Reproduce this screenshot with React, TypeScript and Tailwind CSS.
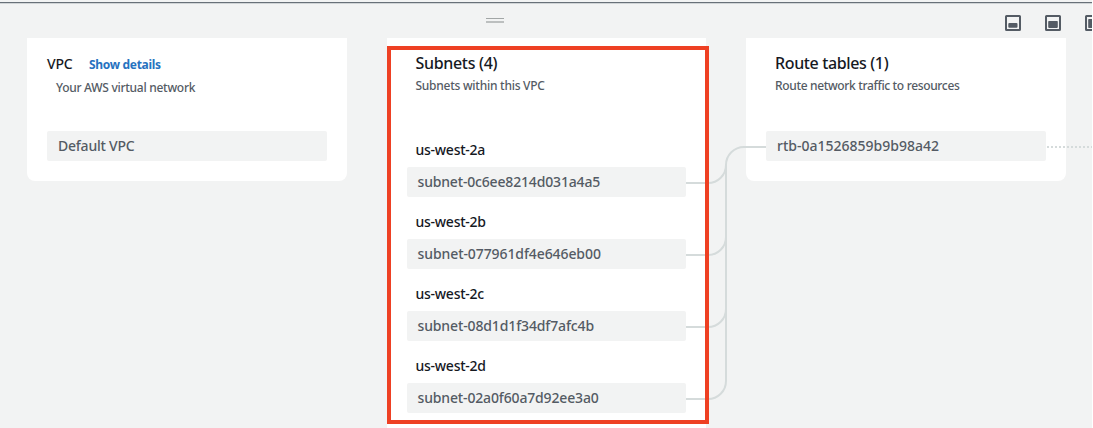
import React from "react";

const subnets = [
  { zone: "us-west-2a", id: "subnet-0c6ee8214d031a4a5", tracking: "tracking-[-0.17px]" },
  { zone: "us-west-2b", id: "subnet-077961df4e646eb00", tracking: "tracking-[-0.09px]" },
  { zone: "us-west-2c", id: "subnet-08d1d1f34df7afc4b", tracking: "tracking-[-0.13px]" },
  { zone: "us-west-2d", id: "subnet-02a0f60a7d92ee3a0", tracking: "tracking-[-0.15px]" },
];

function Resource({ label, tracking, inset = "pl-[11px]" }: { label: string; tracking: string; inset?: string }) {
  return (
    <div className={`flex h-[30px] w-full items-center rounded-[2px] bg-[#f2f3f3] pb-[2px] text-[14px] font-medium text-[#545b64] ${inset}`}>
      <span className={`whitespace-nowrap ${tracking}`}>{label}</span>
    </div>
  );
}

function PanelIcon({ variant }: { variant: "small" | "medium" | "full" }) {
  return (
    <svg className="size-4 shrink-0" viewBox="0 0 16 16" fill="none">
      <rect x="1" y="1" width="14" height="14" rx="0.5" stroke="#545b64" strokeWidth="2" />
      {variant === "small" && <rect x="3.3" y="8" width="9.2" height="4.8" rx="1" fill="#545b64" />}
      {variant === "medium" && <rect x="3.2" y="6" width="9.6" height="6.9" rx="0.8" fill="#545b64" />}
      {variant === "full" && <rect x="3.2" y="4" width="9.6" height="9" rx="0.8" fill="#545b64" />}
    </svg>
  );
}

function Connectors() {
  return (
    <svg className="pointer-events-none absolute left-0 top-0" width="1092" height="428" fill="none" stroke="#d5dbdb" strokeWidth="2">
      {[183, 255, 327, 399].map((y) => (
        <path key={y} d={`M686 ${y}H708A18 18 0 0 0 726 ${y - 18}V165`} />
      ))}
      <path d="M726 183V165A18 18 0 0 1 744 147H766" />
      <path d="M1047 147H1092" strokeDasharray="2 2" />
    </svg>
  );
}

export default function App() {
  return (
    <div className="h-[428px] w-full overflow-hidden bg-white font-['Noto_Sans',sans-serif]">
      <div className="relative flex h-[428px] w-[1092px] flex-col overflow-hidden bg-[#f2f3f3]">
        <header className="relative h-[38px] shrink-0 pt-[2px]">
          <div className="h-px bg-[#687078]" />
          <div className="h-px bg-[#d0d4d6]" />
          <div className="absolute left-[486px] top-[18px] flex w-[18px] flex-col gap-[2px]">
            <div className="h-px bg-[#a2a6a6]" />
            <div className="h-[2px] bg-[#bcbfbf]" />
          </div>
          <div className="absolute left-[1005px] top-[15px] flex gap-6">
            <PanelIcon variant="small" />
            <PanelIcon variant="medium" />
            <PanelIcon variant="full" />
          </div>
        </header>
        <main className="flex w-[1092px] items-start gap-10 pl-[27px]">
          <section className="h-[143px] w-[320px] shrink-0 rounded-b-[8px] bg-white px-5">
            <div className="flex h-[93px] flex-col pt-[17px]">
              <div className="flex h-[19px] items-start gap-4">
                <h2 className="w-[26px] text-[14px] font-medium leading-[18px] tracking-[-0.15px] text-[#16191f]">VPC</h2>
                <a className="whitespace-nowrap pt-px text-[12px] font-bold leading-[18px] tracking-[-0.3px] text-[#2672c0]">Show details</a>
              </div>
              <p className="mt-[5px] whitespace-nowrap pl-[9px] text-[12px] font-medium leading-[18px] tracking-[-0.27px] text-[#545b64]">Your AWS virtual network</p>
            </div>
            <Resource label="Default VPC" tracking="tracking-[-0.22px]" />
          </section>
          <section className="h-[400px] w-[319px] shrink-0 bg-white px-5">
            <div className="h-[101px] pl-[8.5px] pt-[15px]">
              <h2 className="text-[16px] font-medium leading-[20px] tracking-[-0.32px] text-[#16191f]">Subnets (4)</h2>
              <p className="mt-1 whitespace-nowrap text-[12px] font-medium leading-[18px] tracking-[-0.26px] text-[#545b64]">Subnets within this VPC</p>
            </div>
            {subnets.map((s) => (
              <div key={s.id} className="h-[72px]">
                <h3 className="h-[28px] pl-[8.5px] pt-px text-[14px] font-medium leading-[20px] tracking-[-0.25px] text-[#16191f]">{s.zone}</h3>
                <Resource label={s.id} tracking={s.tracking} inset="pl-[10.5px]" />
              </div>
            ))}
          </section>
          <section className="h-[143px] w-[320px] shrink-0 rounded-b-[8px] bg-white px-5">
            <div className="h-[93px] pl-[9px] pt-[15px]">
              <h2 className="text-[16px] font-medium leading-[20px] tracking-[-0.37px] text-[#16191f]">Route tables (1)</h2>
              <p className="mt-1 whitespace-nowrap text-[12px] font-medium leading-[18px] tracking-[-0.34px] text-[#545b64]">Route network traffic to resources</p>
            </div>
            <Resource label="rtb-0a1526859b9b98a42" tracking="tracking-[0px]" />
          </section>
        </main>
        <Connectors />
        <div className="pointer-events-none absolute left-[387px] top-[46px] h-[378px] w-[322px] border-4 border-[#ee4023]" />
      </div>
    </div>
  );
}
